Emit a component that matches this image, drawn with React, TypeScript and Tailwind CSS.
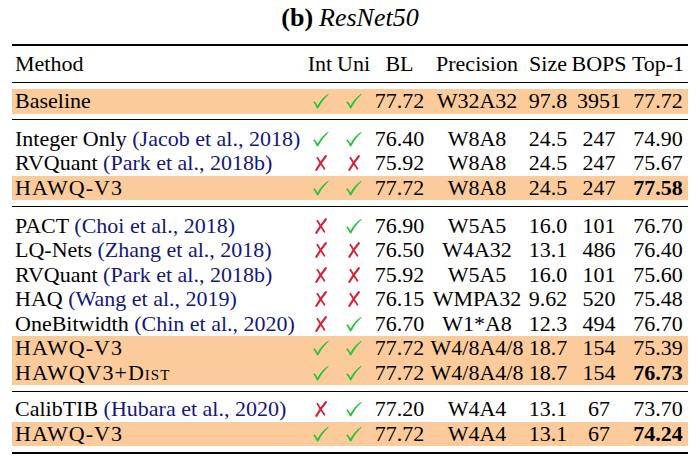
import React from 'react'

type Row = {
  name: React.ReactNode
  cite?: string
  int: boolean
  uni: boolean
  bl: string
  prec: string
  size: string
  bops: string
  top1: string
  bold?: boolean
  hl?: boolean
}

const HAWQ = <span className="tracking-[1px]">HAWQ-V3</span>

const groups: Row[][] = [
  [{ name: 'Baseline', int: true, uni: true, bl: '77.72', prec: 'W32A32', size: '97.8', bops: '3951', top1: '77.72', hl: true }],
  [
    { name: 'Integer Only', cite: '(Jacob et al., 2018)', int: true, uni: true, bl: '76.40', prec: 'W8A8', size: '24.5', bops: '247', top1: '74.90' },
    { name: 'RVQuant', cite: '(Park et al., 2018b)', int: false, uni: false, bl: '75.92', prec: 'W8A8', size: '24.5', bops: '247', top1: '75.67' },
    { name: HAWQ, int: true, uni: true, bl: '77.72', prec: 'W8A8', size: '24.5', bops: '247', top1: '77.58', bold: true, hl: true },
  ],
  [
    { name: 'PACT', cite: '(Choi et al., 2018)', int: false, uni: true, bl: '76.90', prec: 'W5A5', size: '16.0', bops: '101', top1: '76.70' },
    { name: 'LQ-Nets', cite: '(Zhang et al., 2018)', int: false, uni: false, bl: '76.50', prec: 'W4A32', size: '13.1', bops: '486', top1: '76.40' },
    { name: 'RVQuant', cite: '(Park et al., 2018b)', int: false, uni: false, bl: '75.92', prec: 'W5A5', size: '16.0', bops: '101', top1: '75.60' },
    { name: 'HAQ', cite: '(Wang et al., 2019)', int: false, uni: false, bl: '76.15', prec: 'WMPA32', size: '9.62', bops: '520', top1: '75.48' },
    { name: 'OneBitwidth', cite: '(Chin et al., 2020)', int: false, uni: true, bl: '76.70', prec: 'W1*A8', size: '12.3', bops: '494', top1: '76.70' },
    { name: HAWQ, int: true, uni: true, bl: '77.72', prec: 'W4/8A4/8', size: '18.7', bops: '154', top1: '75.39', hl: true },
    {
      name: (
        <span className="tracking-[1px]">
          HAWQV3+D<span className="[font-variant-caps:all-small-caps]">ist</span>
        </span>
      ),
      int: true, uni: true, bl: '77.72', prec: 'W4/8A4/8', size: '18.7', bops: '154', top1: '76.73', bold: true, hl: true,
    },
  ],
  [
    { name: 'CalibTIB', cite: '(Hubara et al., 2020)', int: false, uni: true, bl: '77.20', prec: 'W4A4', size: '13.1', bops: '67', top1: '73.70' },
    { name: HAWQ, int: true, uni: true, bl: '77.72', prec: 'W4A4', size: '13.1', bops: '67', top1: '74.24', bold: true, hl: true },
  ],
]

const cols = 'grid grid-cols-[292px_32px_35px_57px_98px_44px_58px_60px] items-center'

// pifont-style check (ding 51) and cross (ding 55)
function Mark({ ok }: { ok: boolean }) {
  if (ok) {
    return (
      <svg width="17" height="16" viewBox="0 0 17 16" className="inline-block align-middle">
        <path
          d="M1.2 9.2 L2.6 8.2 Q4.3 10.2 5.6 12.6 Q9.4 5.2 16.2 0.8 L16.6 1.4 Q10.6 6.8 6.3 15.2 L5 15.4 Q3.4 11.6 1.2 9.2 Z"
          fill="#2fc23c"
        />
      </svg>
    )
  }
  return (
    <svg width="13" height="16" viewBox="0 0 13 16" className="inline-block align-middle">
      <path d="M11.8 1.2 Q7 7 2.4 14.8" stroke="#d0283e" strokeWidth="2.2" strokeLinecap="round" fill="none" />
      <path d="M3.4 2.8 Q6.4 7.8 10.4 13.8" stroke="#d0283e" strokeWidth="1.8" strokeLinecap="round" fill="none" />
    </svg>
  )
}

function TableRow({ r }: { r: Row }) {
  return (
    <div className={`${cols} h-[24.5px] ${r.hl ? 'bg-[#fccb9c]' : ''}`}>
      <div className="pl-[3px] whitespace-nowrap">
        {r.name}
        {r.cite && <span className="text-[#131779]"> {r.cite}</span>}
      </div>
      <div className="flex justify-center"><Mark ok={r.int} /></div>
      <div className="flex justify-center"><Mark ok={r.uni} /></div>
      <div className="text-center">{r.bl}</div>
      <div className="text-center whitespace-nowrap">{r.prec}</div>
      <div className="text-center">{r.size}</div>
      <div className="text-center">{r.bops}</div>
      <div className={`text-center ${r.bold ? 'font-bold' : ''}`}>{r.top1}</div>
    </div>
  )
}

export default function App() {
  return (
    <div className="w-[700px] h-[462px] bg-white text-black [font-family:Liberation_Serif,Times_New_Roman,serif] text-[22px] leading-none overflow-hidden">
      <div className="h-[44px] flex justify-center pt-[5px] text-[26px]">
        <span className="font-bold">(b)</span>
        <span className="italic ml-[6px]">ResNet50</span>
      </div>
      <div className="mx-[12px]">
        <div className="h-[2px] bg-black" />
        <div className={`${cols} h-[36px]`}>
          <div className="pl-[3px]">Method</div>
          <div className="text-center">Int</div>
          <div className="text-center">Uni</div>
          <div className="text-center">BL</div>
          <div className="text-center">Precision</div>
          <div className="text-center">Size</div>
          <div className="text-center">BOPS</div>
          <div className="text-center">Top-1</div>
        </div>
        {groups.map((g, i) => (
          <div key={i}>
            <div className="h-px bg-black" />
            <div className={i === 0 ? 'pt-[6px] pb-[5px]' : i === 3 ? 'pt-[5.5px] pb-[6px]' : 'pt-[7px] pb-[5.5px]'}>
              {g.map((r, j) => (
                <TableRow key={j} r={r} />
              ))}
            </div>
          </div>
        ))}
        <div className="h-[2px] bg-black" />
      </div>
    </div>
  )
}
